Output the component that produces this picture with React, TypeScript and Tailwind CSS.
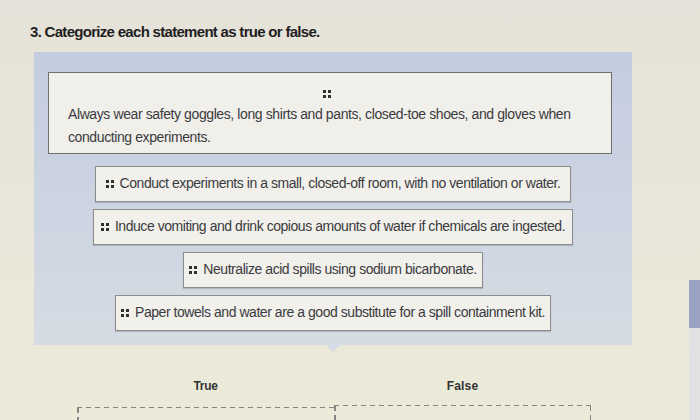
import React from "react";

const Grip = ({ className = "" }: { className?: string }) => (
  <svg width="8" height="8" viewBox="0 0 8 8" className={className}>
    <rect x="0" y="0" width="3" height="3" fill="#2f2f2f" />
    <rect x="5" y="0" width="3" height="3" fill="#2f2f2f" />
    <rect x="0" y="5" width="3" height="3" fill="#2f2f2f" />
    <rect x="5" y="5" width="3" height="3" fill="#2f2f2f" />
  </svg>
);

const Item = ({ text, w }: { text: string; w: string }) => (
  <div
    className={`flex h-[36px] items-center justify-center gap-[6px] whitespace-nowrap border border-[#8c8c8c] bg-[#f1f0eb] shadow-[0_1px_1px_rgba(0,0,0,0.15)] ${w}`}
  >
    <Grip />
    <span className="text-[14px] tracking-[-0.45px] text-[#3b3b3f]">{text}</span>
  </div>
);

const DashH = () => (
  <div className="h-[1.5px] w-full bg-[repeating-linear-gradient(90deg,#858585_0_5px,transparent_5px_9px)]" />
);
const DashV = () => (
  <div className="h-full w-[1.5px] bg-[repeating-linear-gradient(180deg,#858585_0_5px,transparent_5px_9px)]" />
);

export default function App() {
  return (
    <div
      className="relative h-[420px] w-[700px] overflow-hidden bg-gradient-to-b from-[#e5e2d9] to-[#ecebd9]"
      style={{ fontFamily: '"Liberation Sans", Arial, sans-serif' }}
    >
      <div className="pl-[30px] pt-[21px] text-[15px] font-bold tracking-[-0.7px] text-[#1f1f1f]">
        3. Categorize each statement as true or false.
      </div>

      <div className="relative ml-[34px] mt-[8px] w-[598px] bg-gradient-to-b from-[#c4cce1] to-[#d5dce3] pb-[14px] pt-[20px]">
        <div className="ml-[14px] w-[564px] border border-[#6f6f6f] bg-[#f0efea] pb-[4px] pl-[19px] pr-[10px] pt-[17px]">
          <div className="flex justify-center pr-[16px]">
            <Grip />
          </div>
          <p className="mt-[5px] text-[14px] leading-[23px] tracking-[-0.4px] text-[#3b3b3f]">
            Always wear safety goggles, long shirts and pants, closed-toe shoes, and gloves when
            <br />
            conducting experiments.
          </p>
        </div>

        <div className="mt-[12px] flex flex-col items-center gap-[7px]">
          <Item w="w-[476px]" text="Conduct experiments in a small, closed-off room, with no ventilation or water." />
          <Item w="w-[480px]" text="Induce vomiting and drink copious amounts of water if chemicals are ingested." />
          <Item w="w-[300px]" text="Neutralize acid spills using sodium bicarbonate." />
          <Item w="w-[436px]" text="Paper towels and water are a good substitute for a spill containment kit." />
        </div>

        <div className="absolute bottom-[-7px] left-[292px] h-0 w-0 border-l-[7px] border-r-[7px] border-t-[7px] border-l-transparent border-r-transparent border-t-[#d5dce3]" />
      </div>

      <div className="ml-[77px] mt-[32px] grid w-[514px] grid-cols-2">
        <div className="flex flex-col items-center">
          <div className="text-[12px] font-bold tracking-[-0.3px] text-[#333]">True</div>
          <div className="mt-[12px] flex h-[30px] w-full flex-col">
            <DashH />
            <div className="flex-1">
              <DashV />
            </div>
          </div>
        </div>
        <div className="flex flex-col items-center">
          <div className="text-[12px] font-bold tracking-[0.2px] text-[#333]">False</div>
          <div className="mt-[10px] flex h-[30px] w-full flex-col">
            <DashH />
            <div className="flex flex-1 justify-between">
              <DashV />
              <DashV />
            </div>
          </div>
        </div>
      </div>

      <div className="absolute right-0 top-[280px] h-[48px] w-[11px] bg-[#9aa2c2]" />
      <div className="absolute right-0 top-[328px] h-[92px] w-[11px] bg-[#dfe1e3]" />
    </div>
  );
}
